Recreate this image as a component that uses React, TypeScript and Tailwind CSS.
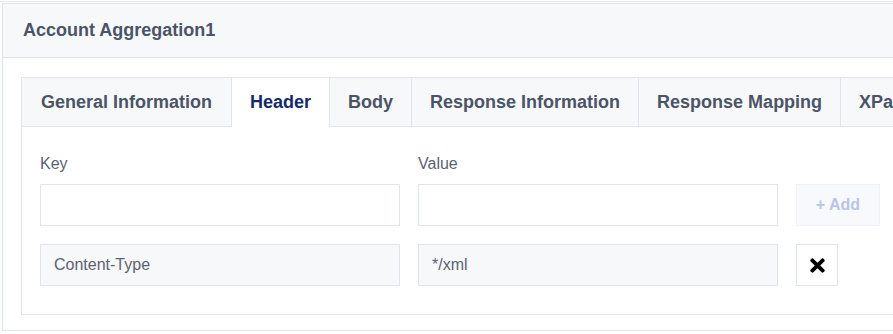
import { FaTimes } from "react-icons/fa";

const tabs = ["General Information", "Header", "Body", "Response Information", "Response Mapping", "XPath"];

function Tab({ label, active, first }: { label: string; active: boolean; first: boolean }) {
	return (
		<div
			className={
				(first ? "px-[19px] " : "px-[18px] ") +
				(active
					? "h-[49px] shrink-0 border-r border-[#dfe4ef] bg-white flex items-center text-[18px] font-bold text-[#14296b]"
					: "h-[49px] shrink-0 border-r border-b border-[#dfe4ef] bg-[#f7f8fa] flex items-center text-[18px] font-bold text-[#4b5466]")
			}
		>
			{label}
		</div>
	);
}

function Field({ value, filled }: { value?: string; filled?: boolean }) {
	return (
		<div
			className={
				(filled ? "bg-[#f7f8fa] " : "bg-white ") +
				"h-[42px] w-[360px] shrink-0 border border-[#dfe4ef] px-[13px] flex items-center text-[16px] text-[#5b6271]"
			}
		>
			{value}
		</div>
	);
}

export default function App() {
	return (
		<div className="w-[893px] h-[334px] overflow-hidden bg-white" style={{ fontFamily: '"Liberation Sans", Arial, sans-serif' }}>
			<div className="mt-px border-t border-[#e6e9f0]" />
			<div className="mt-px ml-[2px] w-[1000px] border border-[#dfe4ef]">
				<div className="h-[54px] border-b border-[#dfe4ef] bg-[#f7f8fa] pl-[20px] flex items-center text-[18px] font-bold text-[#4b5466]">
					Account Aggregation1
				</div>
				<div className="pl-[18px] pt-[19px] pb-[15px]">
					<div className="border border-[#dfe4ef]">
						<div className="flex">
							{tabs.map((t, i) => (
								<Tab key={t} label={t} active={t === "Header"} first={i === 0} />
							))}
							<div className="flex-1 border-b border-[#dfe4ef]" />
						</div>
						<div className="pl-[18px] pt-[27px] pb-[28px]">
							<div className="flex gap-[18px] text-[16px] text-[#5b6271] leading-[20px]">
								<div className="w-[360px]">Key</div>
								<div className="w-[360px]">Value</div>
							</div>
							<div className="mt-[10px] flex gap-[18px]">
								<Field />
								<Field />
								<button className="h-[42px] w-[84px] border border-[#eef1f6] bg-[#f7f9fc] text-[16px] font-bold text-[#b9c6e2]">
									+ Add
								</button>
							</div>
							<div className="mt-[18px] flex gap-[18px]">
								<Field value="Content-Type" filled />
								<Field value="*/xml" filled />
								<button className="h-[42px] w-[42px] border border-[#dfe4ef] bg-white flex items-center justify-center text-black">
									<FaTimes size={21} />
								</button>
							</div>
						</div>
					</div>
				</div>
			</div>
		</div>
	);
}
